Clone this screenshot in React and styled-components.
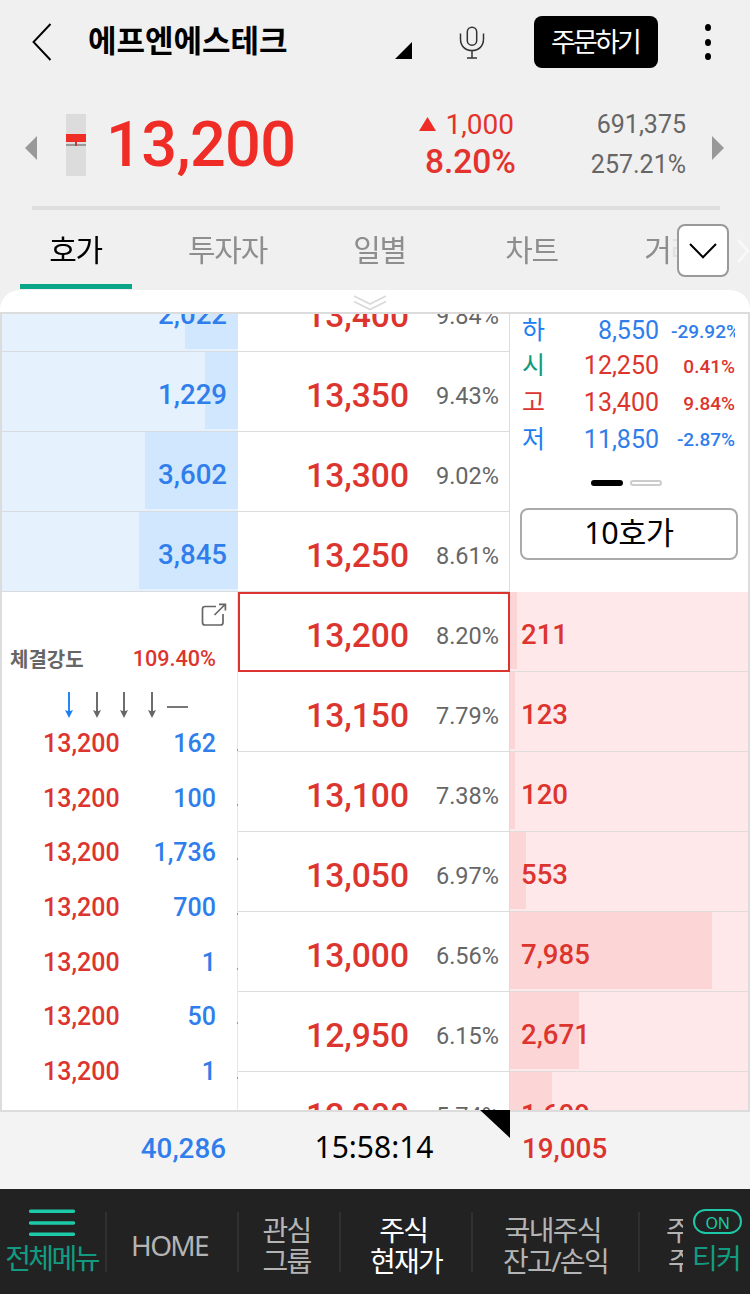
import React, { useState } from 'react';
import styled, { createGlobalStyle } from 'styled-components';

const ASKS = [
  { price: "13,400", rate: "9.84%", qty: "2,022", bar: 53 },
  { price: "13,350", rate: "9.43%", qty: "1,229", bar: 33 },
  { price: "13,300", rate: "9.02%", qty: "3,602", bar: 93 },
  { price: "13,250", rate: "8.61%", qty: "3,845", bar: 99 },
]

const BIDS = [
  { price: "13,200", rate: "8.20%", qty: "211", bar: 7 },
  { price: "13,150", rate: "7.79%", qty: "123", bar: 5 },
  { price: "13,100", rate: "7.38%", qty: "120", bar: 5 },
  { price: "13,050", rate: "6.97%", qty: "553", bar: 16 },
  { price: "13,000", rate: "6.56%", qty: "7,985", bar: 202 },
  { price: "12,950", rate: "6.15%", qty: "2,671", bar: 69 },
  { price: "12,900", rate: "5.74%", qty: "1,609", bar: 42 },
]

const TRADES = ["162", "100", "1,736", "700", "1", "50", "1"]

const SUMMARY = [
  { label: "하", price: "8,550", rate: "-29.92%", color: "#2f7eec", labelColor: "#1a80f0" },
  { label: "시", price: "12,250", rate: "0.41%", color: "#dc342e", labelColor: "#0a9c7c" },
  { label: "고", price: "13,400", rate: "9.84%", color: "#dc342e", labelColor: "#dc342e" },
  { label: "저", price: "11,850", rate: "-2.87%", color: "#2f7eec", labelColor: "#1a80f0" },
]

const TABS = [
  { label: "호가", width: 112, gap: 32 },
  { label: "투자자", width: 128, gap: 28 },
  { label: "일별", width: 120, gap: 32 },
  { label: "차트", width: 120, gap: 49 },
  { label: "거래", width: 60, gap: 0 },
]

function Arrow({ color, size }) {
  return (
    <ArrowIcon width={size} height="26" viewBox="0 0 8 26">
      <path d="M4 0V22" stroke={color} strokeWidth="1.9" fill="none" />
      <path d="M0 18L4 26L8 18L4 19.5Z" fill={color} />
    </ArrowIcon>
  )
}

function App() {
  const [tab, setTab] = useState(0);

  return (
    <Screen>
      <GlobalStyle />
      <Header>
        <BackIcon width="20" height="38" viewBox="0 0 20 38">
          <path d="M18.5 1L1.5 19L18.5 37" fill="none" stroke="#000" strokeWidth="1.9" />
        </BackIcon>
        <Title>에프엔에스테크</Title>
        <Corner width="17" height="17" viewBox="0 0 17 17">
          <path d="M17 0V17H0Z" fill="#000" />
        </Corner>
        <Mic width="26" height="34" viewBox="0 0 26 34" fill="none" stroke="#333" strokeWidth="1.5">
          <rect x="8.3" y="1.2" width="9.4" height="18" rx="4.7" />
          <path d="M1.5 7.5V13C1.5 20 6 24.5 13 24.5S24.5 20 24.5 13V7.5M13 24.5V32M8 32H18" />
        </Mic>
        <OrderButton>주문하기</OrderButton>
        <Dots><i /><i /><i /></Dots>
      </Header>

      <Quote>
        <Side width="12" height="24" viewBox="0 0 12 24"><path d="M12 0V24L0 12Z" /></Side>
        <Candle width="20" height="62" viewBox="0 0 20 62">
          <rect width="20" height="62" fill="#dcdcdc" />
          <rect y="30" width="20" height="2" fill="#999" />
          <rect y="20" width="20" height="8" fill="#ef2c25" />
          <rect x="9" y="28" width="2" height="4" fill="#b5403c" />
        </Candle>
        <Price>13,200</Price>
        <Change>
          <div>
            <svg width="17" height="14" viewBox="0 0 17 14"><path d="M8.5 0L17 14H0Z" fill="#ef2c25" /></svg>
            <span>1,000</span>
          </div>
          <strong>8.20%</strong>
        </Change>
        <Volume>
          <span>691,375</span>
          <span>257.21%</span>
        </Volume>
        <Side width="12" height="24" viewBox="0 0 12 24"><path d="M0 0V24L12 12Z" /></Side>
      </Quote>
      <Divider />

      <Tabs>
        <TabList>
          {TABS.map((t, i) => (
            <Tab key={t.label} $w={t.width} $gap={t.gap} $active={i === tab} onClick={() => setTab(i)}>
              {t.label}
            </Tab>
          ))}
        </TabList>
        <TabMore>
          <svg width="28" height="16" viewBox="0 0 28 16"><path d="M1 1L14 14.2L27 1" fill="none" stroke="#000" strokeWidth="2" /></svg>
        </TabMore>
        <NextIcon width="14" height="24" viewBox="0 0 14 24">
          <path d="M2 1L12 12L2 23" fill="none" stroke="#f8f8f8" strokeWidth="3" />
        </NextIcon>
      </Tabs>

      <Handle>
        <svg width="34" height="16" viewBox="0 0 34 16" fill="none" stroke="#d9d9d9" strokeWidth="1.8">
          <path d="M1 1L17 9L33 1M1 6.5L17 14.5L33 6.5" />
        </svg>
      </Handle>

      <Board>
        <LeftColumn>
          <Ladder>
            {ASKS.map((r) => (
              <AskCell key={r.price}>
                <Bar $color="#d1e7fd" style={{ width: r.bar }} />
                <Qty>{r.qty}</Qty>
              </AskCell>
            ))}
          </Ladder>
          <TradePanel>
            <PopOut width="26" height="24" viewBox="0 0 26 24" fill="none" stroke="#666" strokeWidth="1.7">
              <path d="M15 3.5H4Q1.5 3.5 1.5 6V19.5Q1.5 22 4 22H19.5Q22 22 22 19.5V11M13.5 12L24 1.5M18 1.3H24.4V7.6" />
            </PopOut>
            <Strength>
              <span>체결강도</span>
              <em>109.40%</em>
            </Strength>
            <Trend>
              <Arrow color="#1a80f0" size="8" />
              <Arrow color="#666" size="8" />
              <Arrow color="#666" size="8" />
              <Arrow color="#666" size="8" />
              <Flat />
            </Trend>
            {TRADES.map((qty, i) => (
              <Trade key={i}>
                <b>13,200</b>
                <span>{qty}</span>
                <Tick />
              </Trade>
            ))}
          </TradePanel>
        </LeftColumn>

        <MiddleColumn>
          <Ladder>
            {[...ASKS, ...BIDS].map((r) => (
              <PriceCell key={r.price} $current={r.price === "13,200"}>
                <b>{r.price}</b>
                <span>{r.rate}</span>
              </PriceCell>
            ))}
          </Ladder>
        </MiddleColumn>

        <RightColumn>
          <Summary>
            {SUMMARY.map((s) => (
              <SummaryRow key={s.label} $color={s.color} $label={s.labelColor}>
                <label>{s.label}</label>
                <span>{s.price}</span>
                <small>{s.rate}</small>
              </SummaryRow>
            ))}
            <Pager><PageDot $on /><PageDot /></Pager>
            <DepthButton>10호가</DepthButton>
          </Summary>
          {BIDS.map((r) => (
            <BidCell key={r.price}>
              <Bar $left $color="#fcd6d6" style={{ width: r.bar }} />
              <Qty>{r.qty}</Qty>
            </BidCell>
          ))}
        </RightColumn>
      </Board>

      <Totals>
        <Total $color="#2f7eec">40,286</Total>
        <Clock>
          15:58:14
          <Fold width="30" height="28" viewBox="0 0 30 28"><path d="M0 0H30V28Z" fill="#000" /></Fold>
        </Clock>
        <Total $color="#dc342e" $left>19,005</Total>
      </Totals>

      <Nav>
        <MenuItem>
          <svg width="46" height="28" viewBox="0 0 46 28">
            <path d="M1.7 2.2H44.3M1.7 14H44.3M1.7 25.2H44.3" stroke="#1cc9a8" strokeWidth="3.6" strokeLinecap="round" />
          </svg>
          <span>전체메뉴</span>
        </MenuItem>
        <NavItem $w={132} $pad={5} $single>HOME</NavItem>
        <NavItem $w={102} $pad={5}>관심<br />그룹</NavItem>
        <NavItem $w={132} $pad={0} $active>주식&nbsp;<br />현재가</NavItem>
        <NavItem $w={167} $pad={0}>국내주식&nbsp;<br />잔고/손익</NavItem>
        <NavCut>주식<br /><span>주문</span></NavCut>
        <Ticker>
          <OnBadge>ON</OnBadge>
          <span>티커</span>
        </Ticker>
      </Nav>
    </Screen>
  )
}

export default App

const GlobalStyle = createGlobalStyle`
  * {
    box-sizing: border-box;
  }
  body {
    margin: 0;
    background: #f0f0f0;
  }
  button {
    border: 0;
    padding: 0;
    background: none;
  }
`

const KR = `"Noto Sans", "Noto Sans CJK KR", sans-serif`;

const Screen = styled.main`
  display: flex;
  flex-direction: column;
  width: 750px;
  height: 1294px;
  overflow: hidden;
  background-color: #f0f0f0;
  font-family: Roboto, "Noto Sans CJK KR", sans-serif;
  white-space: nowrap;
`

const Header = styled.header`
  display: flex;
  align-items: flex-start;
  height: 84px;
  flex: none;
`

const BackIcon = styled.svg`
  margin: 23px 0 0 32px;
  flex: none;
`

const Title = styled.h1`
  width: 308px;
  margin: 17px 0 0 36px;
  font-family: "Noto Sans CJK KR", sans-serif;
  font-size: 31px;
  font-weight: 700;
  line-height: 44px;
  flex: none;
`

const Corner = styled.svg`
  margin: 42px 0 0 -1px;
  flex: none;
`

const Mic = styled.svg`
  margin: 26px 0 0 47px;
  flex: none;
`

const OrderButton = styled.button`
  width: 124px;
  height: 52px;
  margin: 16px 0 0 49px;
  padding: 0 2px 1px 0;
  border-radius: 8px;
  background-color: #000;
  color: #fff;
  font-family: ${KR};
  font-size: 27px;
  letter-spacing: -2.8px;
  line-height: 40px;
`

const Dots = styled.div`
  display: flex;
  flex-direction: column;
  gap: 7.5px;
  margin: 24px 0 0 47px;
  i {
    width: 6px;
    height: 7px;
    border-radius: 50%;
    background: #000;
  }
`

const Quote = styled.section`
  display: flex;
  align-items: flex-start;
  height: 122px;
  padding-left: 25px;
  flex: none;
`

const Side = styled.svg`
  margin-top: 52px;
  fill: #999;
  flex: none;
`

const Candle = styled.svg`
  margin: 30px 0 0 29px;
  flex: none;
`

const Price = styled.div`
  width: 290px;
  margin: 23px 0 0 20px;
  color: #ef2c25;
  font-size: 63px;
  font-weight: 500;
  letter-spacing: -0.6px;
  line-height: 76px;
`

const Change = styled.div`
  display: flex;
  flex-direction: column;
  align-items: flex-end;
  width: 120px;
  margin-top: 22px;
  color: #e3332c;
  div {
    display: flex;
    align-items: center;
    gap: 10px;
    height: 36px;
    padding-right: 2px;
    font-size: 28px;
  }
  strong {
    font-size: 33.5px;
    font-weight: 500;
    line-height: 40px;
  }
`

const Volume = styled.div`
  display: flex;
  flex-direction: column;
  align-items: flex-end;
  width: 170px;
  margin: 21px 26px 0 0;
  color: #666;
  font-size: 25px;
  line-height: 40px;
`

const Divider = styled.div`
  height: 4px;
  margin: 0 30px 0 32px;
  background-color: #dedede;
  flex: none;
`

const Tabs = styled.nav`
  display: flex;
  height: 80px;
  padding-left: 20px;
  flex: none;
`

// the last tab fades out under the expand button
const TabList = styled.div`
  display: flex;
  width: 657px;
  overflow: hidden;
  mask-image: linear-gradient(90deg, #000 649px, rgba(0, 0, 0, 0.15) 650px);
`

const Tab = styled.button`
  flex: none;
  width: ${(p) => p.$w}px;
  height: 79px;
  margin-right: ${(p) => p.$gap}px;
  padding: 5px 1px 0 0;
  border-bottom: 5px solid ${(p) => (p.$active ? "#0aa688" : "transparent")};
  color: ${(p) => (p.$active ? "#000" : "#8e8e8e")};
  font-family: ${KR};
  font-size: 30px;
  letter-spacing: -1.3px;
  line-height: 66px;
`

const TabMore = styled.button`
  display: flex;
  align-items: center;
  justify-content: center;
  width: 52px;
  height: 53px;
  margin-top: 14px;
  border: 2px solid #999;
  border-radius: 8px;
  background-color: #fff;
  flex: none;
`

const NextIcon = styled.svg`
  margin: 29px 0 0 7px;
`

const Handle = styled.div`
  display: flex;
  justify-content: center;
  height: 22px;
  padding: 5px 10px 0 0;
  border-radius: 20px 20px 0 0;
  background-color: #fff;
  flex: none;
`

const Board = styled.section`
  display: flex;
  height: 800px;
  border: 2px solid #dcdcdc;
  background-color: #fff;
  overflow: hidden;
  flex: none;
`

const LeftColumn = styled.div`
  width: 236px;
  flex: none;
`

const MiddleColumn = styled.div`
  width: 272px;
  border-right: 1px solid #dcdcdc;
  flex: none;
`

const RightColumn = styled.div`
  width: 238px;
  flex: none;
`

// the first level is scrolled half way out of the board
const Ladder = styled.div`
  margin-top: -42px;
`

const AskCell = styled.div`
  display: flex;
  position: relative;
  justify-content: flex-end;
  height: 80px;
  padding: 5px 11px 0 0;
  border-bottom: 1px solid #d8dce0;
  background-color: #e6f1fe;
  color: #2f7eec;
`

const BidCell = styled(AskCell)`
  justify-content: flex-start;
  padding: 5px 0 0 11px;
  border-bottom-color: #e0dcdc;
  background-color: #fee8e9;
  color: #dc342e;
`

const Bar = styled.div`
  position: absolute;
  top: 0;
  bottom: 2px;
  ${(p) => (p.$left ? "left: 0;" : "right: 0;")}
  background-color: ${(p) => p.$color};
`

const Qty = styled.span`
  position: relative;
  font-size: 27.6px;
  font-weight: 500;
  line-height: 76px;
`

const PriceCell = styled.div`
  display: flex;
  justify-content: flex-end;
  height: 80px;
  padding: 5px 10px 0 0;
  border-bottom: 1px solid #dcdcdc;
  line-height: 78px;
  ${(p) => p.$current && `
    margin-right: -1px;
    padding: 3px 9px 0 0;
    border: 2px solid #dc342e;
  `}
  b {
    color: #dc342e;
    font-size: 33.6px;
    font-weight: 500;
  }
  span {
    width: 90px;
    color: #666;
    font-size: 23.5px;
    text-align: right;
  }
`

const TradePanel = styled.div`
  display: flex;
  flex-direction: column;
  height: 518px;
  border-right: 1px solid #e6e6e6;
`

const PopOut = styled.svg`
  align-self: flex-end;
  margin: 11px 10px 0 0;
  flex: none;
`

const Strength = styled.div`
  display: flex;
  justify-content: space-between;
  align-items: center;
  height: 34px;
  margin: 14px 21px 0 8px;
  color: #666;
  flex: none;
  span {
    font-family: "Noto Sans CJK KR", sans-serif;
    font-size: 20px;
    font-weight: 700;
  }
  em {
    color: #dc342e;
    font-size: 21.6px;
    font-style: normal;
    font-weight: 500;
  }
`

const Trend = styled.div`
  display: flex;
  gap: 19.6px;
  height: 26px;
  margin: 17px 0 10px 63px;
  flex: none;
`

const ArrowIcon = styled.svg`
  flex: none;
`

const Flat = styled.i`
  width: 21px;
  height: 2px;
  margin: 14px 0 0 -8px;
  background: #777;
`

const Trade = styled.div`
  display: flex;
  position: relative;
  justify-content: space-between;
  height: 54.7px;
  padding: 0 21px 0 41px;
  font-size: 25px;
  font-weight: 500;
  line-height: 32px;
  flex: none;
  b {
    color: #dc342e;
    font-weight: 500;
  }
  span {
    color: #2f7eec;
  }
`

// edge of the clipped change mark
const Tick = styled.i`
  position: absolute;
  right: -1px;
  top: 21px;
  width: 1px;
  height: 2px;
  background: #999;
`

const Summary = styled.div`
  display: flex;
  flex-direction: column;
  align-items: center;
  height: 278px;
`

const SummaryRow = styled.div`
  display: grid;
  grid-template-columns: 30px 107px 64px;
  column-gap: 6px;
  align-items: center;
  width: 213px;
  height: 36.7px;
  margin-left: -1px;
  overflow: hidden;
  color: ${(p) => p.$color};
  font-size: 25px;
  text-align: right;
  flex: none;
  &:first-child {
    height: 34px;
  }
  label {
    margin-top: -5px;
    color: ${(p) => p.$label};
    font-family: "Noto Sans CJK KR", sans-serif;
    font-size: 25px;
    line-height: 31px;
    text-align: left;
  }
  span {
    margin-right: 6px;
    line-height: 30px;
  }
  small {
    font-size: 19px;
    font-weight: 500;
  }
`

const Pager = styled.div`
  display: flex;
  gap: 7px;
  margin: 22px 0 22px -5px;
  flex: none;
`

const PageDot = styled.i`
  width: 32px;
  height: 6px;
  border: 2px solid ${(p) => (p.$on ? "#000" : "#ccc")};
  border-radius: 3px;
  background: ${(p) => (p.$on ? "#000" : "#fff")};
`

const DepthButton = styled.button`
  width: 218px;
  height: 52px;
  padding-bottom: 4px;
  border: 2px solid #aaa;
  border-radius: 8px;
  background-color: #fff;
  color: #000;
  font-family: ${KR};
  font-size: 30.5px;
  letter-spacing: -0.4px;
  line-height: 40px;
`

const Totals = styled.section`
  display: grid;
  grid-template-columns: 238px 272px 240px;
  height: 77px;
  background-color: #f3f3f3;
  line-height: 74px;
  flex: none;
`

const Total = styled.span`
  padding: 0 12px;
  color: ${(p) => p.$color};
  font-size: 27.8px;
  font-weight: 500;
  text-align: ${(p) => (p.$left ? "left" : "right")};
`

const Clock = styled.div`
  position: relative;
  font-family: "Noto Sans", sans-serif;
  font-size: 30px;
  line-height: 70px;
  text-align: center;
`

const Fold = styled.svg`
  position: absolute;
  top: -2px;
  right: 0;
`

const Nav = styled.footer`
  display: flex;
  height: 105px;
  background-color: #222;
  color: #b4b4b4;
  font-family: ${KR};
  font-size: 28px;
  letter-spacing: -1.7px;
  line-height: 31px;
  text-align: center;
  flex: none;
`

const MenuItem = styled.div`
  display: flex;
  flex-direction: column;
  align-items: center;
  width: 105px;
  padding: 20px 2px 0 0;
  color: #129b81;
  flex: none;
  span {
    margin-top: 6px;
    letter-spacing: -2.6px;
  }
`

const NavItem = styled.div`
  flex: none;
  width: ${(p) => p.$w}px;
  height: 60px;
  margin-top: 23px;
  padding-top: ${(p) => (p.$single ? 18 : 3)}px;
  padding-right: ${(p) => p.$pad}px;
  border-left: 2px solid #303030;
  color: ${(p) => (p.$active ? "#fff" : "#b4b4b4")};
`

const NavCut = styled(NavItem)`
  width: 45px;
  padding-left: 26px;
  text-align: left;
  overflow: hidden;
  span {
    margin-left: 2px;
  }
`

const Ticker = styled.div`
  display: flex;
  flex-direction: column;
  align-items: center;
  width: 67px;
  padding: 20px 0 0 2px;
  color: #129b81;
  flex: none;
  > span:last-child {
    margin: 9px 3px 0 0;
  }
`

const OnBadge = styled.span`
  width: 49px;
  height: 25px;
  border: 2px solid #1cc9a8;
  border-radius: 13px;
  color: #1cc9a8;
  font-size: 16px;
  letter-spacing: -0.3px;
  line-height: 24px;
`
